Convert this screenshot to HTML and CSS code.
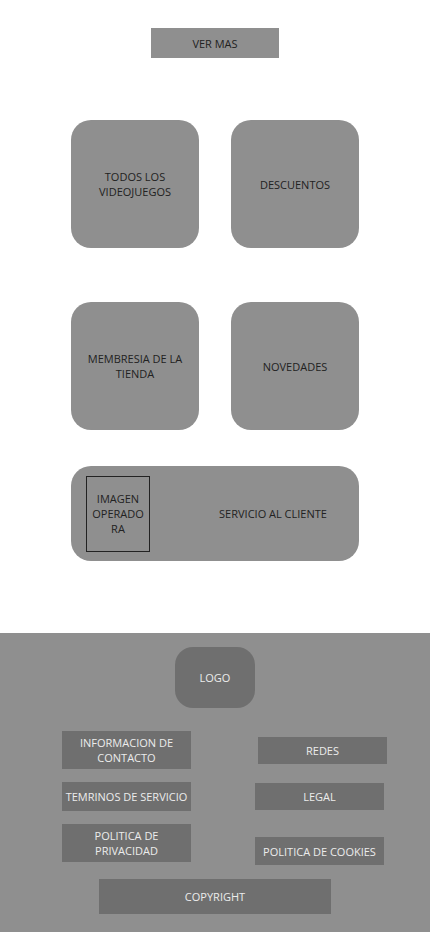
FILE: index.html
```html
<!DOCTYPE html>
<html>
<head>
  <title>Tienda de Videojuegos</title>
  <link rel="stylesheet" href="styles.css">
</head>
<body>

<main class="content">
  <div class="ver-mas">VER MAS</div>

  <div class="tiles">
    <div class="tile">TODOS LOS<br>VIDEOJUEGOS</div>
    <div class="tile">DESCUENTOS</div>
    <div class="tile">MEMBRESIA DE LA<br>TIENDA</div>
    <div class="tile">NOVEDADES</div>
  </div>

  <div class="service">
    <div class="operator">IMAGEN<br>OPERADO<br>RA</div>
    <div class="service-text">SERVICIO AL CLIENTE</div>
  </div>
</main>

<footer class="footer">
  <div class="logo">LOGO</div>

  <div class="links">
    <div class="link link-tall">INFORMACION DE<br>CONTACTO</div>
    <div class="link link-redes">REDES</div>
    <div class="link link-mid">TEMRINOS DE SERVICIO</div>
    <div class="link link-legal">LEGAL</div>
    <div class="link link-tall link-top">POLITICA DE<br>PRIVACIDAD</div>
    <div class="link link-cookies">POLITICA DE COOKIES</div>
  </div>

  <div class="copyright">COPYRIGHT</div>
</footer>

</body>
</html>
```

FILE: styles.css
```css
body {
  font-family: "Open Sans", Arial, sans-serif;
  font-size: 11px;
  line-height: 15px;
  color: #222;
  background-color: #fff;
  margin: 0;
  padding: 0;
}

.content {
  display: flex;
  flex-direction: column;
  align-items: center;
  padding-top: 28px;
  padding-bottom: 72px;
}

.ver-mas {
  width: 128px;
  height: 30px;
  background-color: #8f8f8f;
  display: flex;
  align-items: center;
  justify-content: center;
}

.tiles {
  display: grid;
  grid-template-columns: 128px 128px;
  column-gap: 32px;
  row-gap: 54px;
  margin-top: 62px;
}

.tile {
  height: 128px;
  background-color: #8f8f8f;
  border-radius: 20px;
  display: flex;
  align-items: center;
  justify-content: center;
  text-align: center;
}

.service {
  width: 288px;
  height: 95px;
  margin-top: 36px;
  background-color: #8f8f8f;
  border-radius: 20px;
  display: flex;
  align-items: center;
  box-sizing: border-box;
  padding-left: 15px;
}

.operator {
  width: 64px;
  height: 76px;
  border: 1px solid #222;
  box-sizing: border-box;
  display: flex;
  align-items: center;
  justify-content: center;
  text-align: center;
}

.service-text {
  flex: 1;
  text-align: center;
  padding-left: 37px;
}

.footer {
  background-color: #8f8f8f;
  color: #ececec;
  height: 299px;
  box-sizing: border-box;
  padding-top: 14px;
  display: flex;
  flex-direction: column;
  align-items: flex-start;
}

.logo {
  width: 80px;
  height: 61px;
  margin-left: 175px;
  background-color: #6f6f6f;
  border-radius: 18px;
  display: flex;
  align-items: center;
  justify-content: center;
}

.links {
  display: grid;
  grid-template-columns: 129px 129px;
  column-gap: 64px;
  row-gap: 13px;
  margin-top: 23px;
  margin-left: 62px;
  align-items: center;
}

.link {
  background-color: #6f6f6f;
  display: flex;
  align-items: center;
  justify-content: center;
  text-align: center;
}

.link-tall {
  height: 38px;
}

.link-top {
  align-self: start;
}

.link-mid {
  height: 29px;
}

.link-redes {
  width: 129px;
  height: 27px;
  margin-left: 3px;
}

.link-legal {
  height: 27px;
}

.link-cookies {
  height: 28px;
  align-self: start;
  margin-top: 13px;
}

.copyright {
  width: 232px;
  height: 35px;
  margin-top: 14px;
  margin-left: 99px;
  background-color: #6f6f6f;
  display: flex;
  align-items: center;
  justify-content: center;
}
```
